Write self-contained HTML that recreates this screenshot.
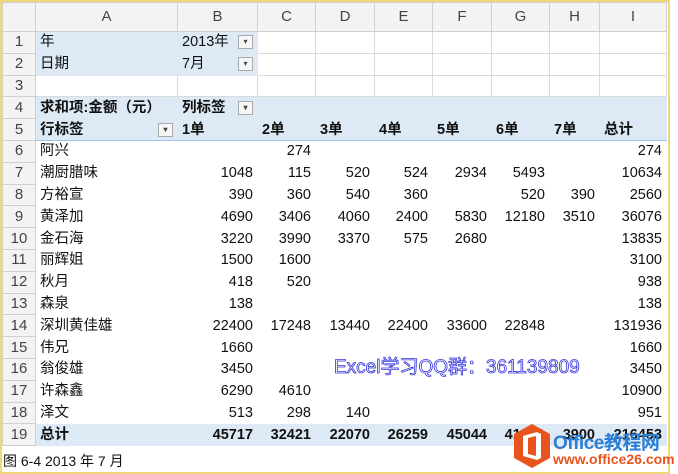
<!DOCTYPE html>
<html><head><meta charset="utf-8"><style>
*{margin:0;padding:0;box-sizing:border-box}
body{width:678px;height:474px;background:#fff;position:relative;overflow:hidden;font-family:"Liberation Sans","Noto Sans CJK SC",sans-serif}
.frame{position:absolute;left:0;top:0;width:670px;height:474px;border:2px solid #f1d77a}
table{position:absolute;left:2px;top:2px;border-collapse:collapse;table-layout:fixed;font-size:14.5px;color:#111}
td{border:1px solid #dadada;height:21.8px;padding:0 4px;white-space:nowrap;overflow:hidden;text-align:right;line-height:20px}
tr.h td{height:29px;background:#f3f3f3;text-align:center;color:#444;font-size:15px;border-color:#d0d0d0}
td.n{background:#f3f3f3;text-align:center;color:#444;font-size:15px;padding:0;border-color:#d0d0d0}
td.l{text-align:left}
tr.p td{border-color:#fff}
tr.p td.n{border-color:#d0d0d0}
tr.p td.n{border-right-color:#d0d0d0}
.bl{background:#dde9f5;border-color:#dde9f5!important}
.b{font-weight:bold}
.dd{display:inline-block;width:15px;height:14px;border:1px solid #aaa;background:#f6f6f6;vertical-align:middle;float:right;margin-top:3px;font-size:8px;line-height:12px;text-align:center;color:#444}
tr.r5 td.bl{border-bottom:1px solid #9dc3e6!important}
tr.r19 td.bl{border-top:1px solid #9dc3e6!important}
.wm{position:absolute;left:334px;top:352px;font-size:19px;color:#fff;-webkit-text-stroke:0.8px #3333dd;font-family:"Liberation Sans","Noto Sans CJK SC",sans-serif}
.cap{position:absolute;left:3px;top:451px;font-size:14px;color:#111}
</style></head><body>
<table>
<colgroup><col style="width:33px"><col style="width:142px"><col style="width:80px"><col style="width:58px"><col style="width:59px"><col style="width:58px"><col style="width:59px"><col style="width:58px"><col style="width:50px"><col style="width:67px"></colgroup>
<tr class="h"><td></td><td>A</td><td>B</td><td>C</td><td>D</td><td>E</td><td>F</td><td>G</td><td>H</td><td>I</td></tr>
<tr><td class="n">1</td><td class="l bl">年</td><td class="l bl">2013年<span class="dd">▾</span></td><td></td><td></td><td></td><td></td><td></td><td></td><td></td></tr>
<tr><td class="n">2</td><td class="l bl">日期</td><td class="l bl">7月<span class="dd">▾</span></td><td></td><td></td><td></td><td></td><td></td><td></td><td></td></tr>
<tr><td class="n">3</td><td></td><td></td><td></td><td></td><td></td><td></td><td></td><td></td><td></td></tr>
<tr class="p"><td class="n">4</td><td class="l bl b">求和项:金额（元）</td><td class="l bl b">列标签<span class="dd">▾</span></td><td class="bl"></td><td class="bl"></td><td class="bl"></td><td class="bl"></td><td class="bl"></td><td class="bl"></td><td class="bl"></td></tr>
<tr class="p r5"><td class="n">5</td><td class="l bl b">行标签<span class="dd">▾</span></td><td class="l bl b">1单</td><td class="l bl b">2单</td><td class="l bl b">3单</td><td class="l bl b">4单</td><td class="l bl b">5单</td><td class="l bl b">6单</td><td class="l bl b">7单</td><td class="l bl b">总计</td></tr>
<tr class="p"><td class="n">6</td><td class="l">阿兴</td><td></td><td>274</td><td></td><td></td><td></td><td></td><td></td><td>274</td></tr>
<tr class="p"><td class="n">7</td><td class="l">潮厨腊味</td><td>1048</td><td>115</td><td>520</td><td>524</td><td>2934</td><td>5493</td><td></td><td>10634</td></tr>
<tr class="p"><td class="n">8</td><td class="l">方裕宣</td><td>390</td><td>360</td><td>540</td><td>360</td><td></td><td>520</td><td>390</td><td>2560</td></tr>
<tr class="p"><td class="n">9</td><td class="l">黄泽加</td><td>4690</td><td>3406</td><td>4060</td><td>2400</td><td>5830</td><td>12180</td><td>3510</td><td>36076</td></tr>
<tr class="p"><td class="n">10</td><td class="l">金石海</td><td>3220</td><td>3990</td><td>3370</td><td>575</td><td>2680</td><td></td><td></td><td>13835</td></tr>
<tr class="p"><td class="n">11</td><td class="l">丽辉姐</td><td>1500</td><td>1600</td><td></td><td></td><td></td><td></td><td></td><td>3100</td></tr>
<tr class="p"><td class="n">12</td><td class="l">秋月</td><td>418</td><td>520</td><td></td><td></td><td></td><td></td><td></td><td>938</td></tr>
<tr class="p"><td class="n">13</td><td class="l">森泉</td><td>138</td><td></td><td></td><td></td><td></td><td></td><td></td><td>138</td></tr>
<tr class="p"><td class="n">14</td><td class="l">深圳黄佳雄</td><td>22400</td><td>17248</td><td>13440</td><td>22400</td><td>33600</td><td>22848</td><td></td><td>131936</td></tr>
<tr class="p"><td class="n">15</td><td class="l">伟兄</td><td>1660</td><td></td><td></td><td></td><td></td><td></td><td></td><td>1660</td></tr>
<tr class="p"><td class="n">16</td><td class="l">翁俊雄</td><td>3450</td><td></td><td></td><td></td><td></td><td></td><td></td><td>3450</td></tr>
<tr class="p"><td class="n">17</td><td class="l">许森鑫</td><td>6290</td><td>4610</td><td></td><td></td><td></td><td></td><td></td><td>10900</td></tr>
<tr class="p"><td class="n">18</td><td class="l">泽文</td><td>513</td><td>298</td><td>140</td><td></td><td></td><td></td><td></td><td>951</td></tr>
<tr class="p r19"><td class="n">19</td><td class="l bl b">总计</td><td class="bl b">45717</td><td class="bl b">32421</td><td class="bl b">22070</td><td class="bl b">26259</td><td class="bl b">45044</td><td class="bl b">41041</td><td class="bl b">3900</td><td class="bl b">216453</td></tr>
</table>
<div class="frame"></div>
<div class="wm">Excel学习QQ群：361139809</div>
<div class="cap">图 6-4 2013 年 7 月</div>
<svg style="position:absolute;left:513px;top:423px" width="38" height="46" viewBox="0 0 38 46">
<polygon points="19,1 37,11 37,35 19,45 1,35 1,11" fill="#e8541e"/>
<path d="M10 13 L24 9 L28 11 L28 35 L24 37 L10 33 Z M15 15 L15 31 L23 33 L23 13 Z" fill="#fff" fill-rule="evenodd"/>
</svg>
<div style="position:absolute;left:553px;top:428px;font-size:19px;font-weight:bold;color:#2b7fd4;letter-spacing:-0.5px">Office教程网</div>
<div style="position:absolute;left:553px;top:451px;font-size:14px;font-weight:bold;color:#e8541e">www.office26.com</div>
</body></html>
